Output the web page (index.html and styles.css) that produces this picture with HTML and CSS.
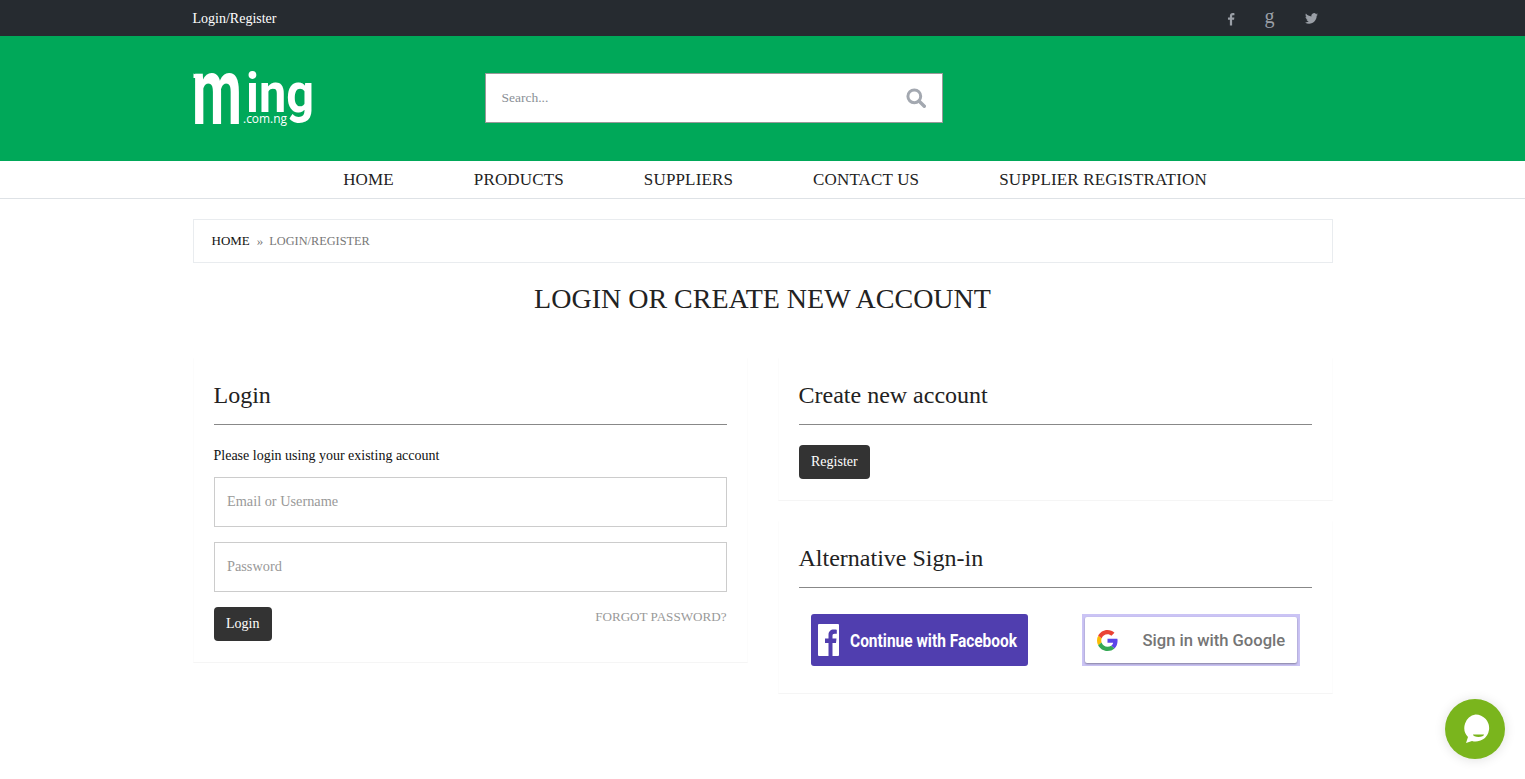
FILE: index.html
```
<!DOCTYPE html>
<html lang="en">
<head>
<meta charset="utf-8">
<title>Login or create new account</title>
<link rel="stylesheet" href="styles.css">
</head>
<body>
<div class="topbar">
  <div class="container topbar-row">
    <a class="top-link">Login/Register</a>
    <div class="socials">
      <svg class="soc soc-f" viewBox="0 0 10 16" width="8" height="14"><path d="M6.400 16V9h2.400l.4-2.800H6.400V4.500c0-.8.2-1.300 1.400-1.300h1.500V.7C9 .7 8.200.6 7.200.6 5 .6 3.600 1.900 3.600 4.200v2H1.200V9h2.400v7z" fill="#9a9fa6"/></svg>
      <span class="soc-g">g</span>
      <svg class="soc soc-t" viewBox="0 0 24 20" width="13" height="11"><path d="M24 2.400c-.9.400-1.800.7-2.800.8 1-.6 1.800-1.600 2.200-2.700-1 .6-2 1-3.100 1.200A4.900 4.900 0 0 0 11.900 6.200C7.800 6 4.200 4 1.700.9c-1.300 2.200-.7 5.100 1.500 6.600-.8 0-1.600-.2-2.200-.6 0 2.300 1.600 4.400 3.900 4.900-.7.200-1.500.2-2.200.1.600 2 2.400 3.400 4.600 3.400A9.900 9.900 0 0 1 0 17.300 14 14 0 0 0 7.500 19.500c9.100 0 14.300-7.700 14-14.600 1-.7 1.800-1.500 2.500-2.500z" fill="#9a9fa6"/></svg>
    </div>
  </div>
</div>

<header class="brand">
  <div class="container brand-row">
    <svg class="logo" viewBox="0 0 122 58" width="122" height="58" role="img" aria-label="ming.com.ng">
      <path d="M0.500 3.500l10 4.500H0.500z" fill="#fff"/>
      <text class="logo-m" x="-1" y="54" textLength="50" lengthAdjust="spacingAndGlyphs">m</text>
      <text class="logo-main" x="53" y="42" textLength="68" lengthAdjust="spacingAndGlyphs">ing</text>
      <text class="logo-sub" x="50" y="53" textLength="44" lengthAdjust="spacingAndGlyphs">.com.ng</text>
    </svg>
    <form class="search">
      <span class="search-text">Search...</span>
      <svg class="search-icon" viewBox="0 0 20 20" width="20" height="20"><circle cx="8.300" cy="8.300" r="6.400" fill="none" stroke="#a3a8b0" stroke-width="3"/><path d="M13 13l5.300 5.300" stroke="#a3a8b0" stroke-width="3.400" stroke-linecap="round"/></svg>
    </form>
  </div>
</header>

<nav class="mainnav">
  <a>HOME</a><a>PRODUCTS</a><a>SUPPLIERS</a><a>CONTACT US</a><a>SUPPLIER REGISTRATION</a>
</nav>

<main class="container">
  <div class="crumbs"><a class="crumb-home">HOME</a><span class="crumb-sep">»</span><span class="crumb-cur">LOGIN/REGISTER</span></div>
  <h1 class="page-title">LOGIN OR CREATE NEW ACCOUNT</h1>
  <div class="cols">
    <section class="panel">
      <h2 class="panel-title">Login</h2>
      <p class="panel-note">Please login using your existing account</p>
      <div class="field">Email or Username</div>
      <div class="field">Password</div>
      <div class="form-foot">
        <a class="btn">Login</a>
        <a class="forgot">FORGOT PASSWORD?</a>
      </div>
    </section>
    <div class="col-right">
      <section class="panel panel-reg">
        <h2 class="panel-title">Create new account</h2>
        <a class="btn">Register</a>
      </section>
      <section class="panel panel-alt">
        <h2 class="panel-title">Alternative Sign-in</h2>
        <div class="alt-row">
          <a class="fb-btn">
            <svg viewBox="0 0 21 32" width="21" height="32"><rect width="21" height="32" rx="1" fill="#fff"/><path d="M14.500 32V19h3.500l.5-4.500h-4v-2.600c0-1.300.4-2.100 2.200-2.100h2.100V5.800c-.4 0-1.700-.2-3.100-.2-3.100 0-5.200 1.900-5.200 5.300v3.600H7V19h3.500v13z" fill="#503eaf"/></svg>
            <span class="fb-text">Continue with Facebook</span>
          </a>
          <a class="g-wrap">
            <span class="g-btn">
              <svg viewBox="0 0 48 48" width="21" height="21"><path fill="#ea4335" d="M24 9.500c3.500 0 6.700 1.300 9.100 3.500l6.800-6.800C35.800 2.400 30.200 0 24 0 14.600 0 6.500 5.400 2.600 13.200l7.900 6.100C12.400 13.600 17.700 9.500 24 9.500z"/><path fill="#5b45e8" d="M47 24.500c0-1.600-.1-3.100-.4-4.500H24v9h12.900c-.6 3-2.200 5.500-4.700 7.200l7.700 6c4.500-4.200 7.100-10.300 7.100-17.700z"/><path fill="#fbbc05" d="M10.500 28.700c-.5-1.500-.8-3-.8-4.700s.3-3.200.8-4.700l-7.900-6.100C.9 16.500 0 20.100 0 24s.9 7.500 2.600 10.800z"/><path fill="#34a853" d="M24 48c6.500 0 11.900-2.100 15.900-5.800l-7.700-6c-2.200 1.500-4.900 2.300-8.200 2.300-6.300 0-11.600-4.200-13.500-9.900l-7.900 6.200C6.500 42.600 14.600 48 24 48z"/></svg>
              <span class="g-text">Sign in with Google</span>
            </span>
          </a>
        </div>
      </section>
    </div>
  </div>
</main>

<a class="chat" aria-label="Chat">
  <svg viewBox="0 0 30 30" width="30" height="30"><path d="M15.500 0.500a13.500 13.500 0 1 1-3.500 26.500L6 29l2-6A13.500 13.500 0 0 1 15.500 0.500z" fill="#fff"/><path d="M13 20.500h11a5.500 2.500 0 0 1-11 0z" fill="#7ab51d"/></svg>
</a>
</body>
</html>
```
FILE: styles.css
```
* { box-sizing: border-box; }
html, body { margin: 0; padding: 0; }
body { font-family: "Liberation Serif", serif; color: #212529; background: #fff; height: 779px; overflow: hidden; position: relative; }
.container { width: 1140px; margin: 0 auto; }

.topbar { background: #262b30; height: 36px; }
.topbar-row { display: flex; justify-content: space-between; align-items: center; height: 36px; padding-top: 1px; }
.top-link { color: #fff; font-size: 14px; }
.socials { display: flex; align-items: center; gap: 30px; padding-right: 15px; }
.soc { display: block; }
.soc-g { color: #9a9fa6; font-size: 20px; line-height: 14px; margin-top: -5px; }

.brand { background: #00a859; height: 125px; }
.brand-row { display: flex; align-items: flex-start; }
.logo { margin-top: 34px; display: block; flex: none; overflow: visible; }
.logo-m { font-family: "Roboto", sans-serif; font-weight: 700; font-size: 95px; fill: #fff; }
.logo-main { font-family: "Roboto", sans-serif; font-weight: 700; font-size: 56px; fill: #fff; }
.logo-sub { font-family: "Open Sans", sans-serif; font-size: 12px; fill: #fff; }
.search { margin-left: 170px; margin-top: 37px; width: 458px; height: 50px; background: #fff; border: 1px solid #999; display: flex; align-items: center; justify-content: space-between; padding: 0 16px; }
.search-text { color: #8a8f96; font-size: 13.500px; }
.search-icon { display: block; }

.mainnav { height: 38px; border-bottom: 1px solid #dee2e6; display: flex; justify-content: center; align-items: center; gap: 80px; padding: 1px 0 0 25px; }
.mainnav a { font-size: 17px; letter-spacing: .15px; color: #222; }

.crumbs { margin-top: 20px; height: 44px; border: 1px solid #e9ecef; display: flex; align-items: center; padding-left: 18px; font-size: 13px; }
.crumb-home { color: #111; }
.crumb-sep { color: #777; margin: 0 6px 0 7px; }
.crumb-cur { color: #777; font-size: 12.300px; }

.page-title { margin: 19px 0 0; font-weight: 400; font-size: 28px; line-height: 34px; text-align: center; color: #222; }

.cols { display: grid; grid-template-columns: 555px 555px; column-gap: 30px; margin-top: 42px; align-items: start; }
.panel { padding: 21px 20px 21px; border: 1px solid #fcfcfc; border-top-color: #fff; border-bottom-color: #f5f5f5; }
.panel-title { margin: 0 0 20px; padding-bottom: 14px; border-bottom: 1px solid #888; font-weight: 400; font-size: 24px; line-height: 30px; color: #222; }
.panel-note { margin: 0 0 11px; padding-top: 1px; font-size: 14px; line-height: 20px; color: #111; }
.field { height: 50px; border: 1px solid #ccc; margin-bottom: 15px; padding: 0 12.500px 2px; display: flex; align-items: center; font-size: 14.300px; color: #999; }
.form-foot { display: flex; justify-content: space-between; align-items: flex-start; }
.btn { display: inline-block; background: #333; color: #fff; font-size: 14px; height: 34px; line-height: 34px; padding: 0 12.500px; border-radius: 4px; }
.forgot { color: #999; font-size: 13.100px; line-height: 20px; }
.panel-alt { margin-top: 20px; padding-bottom: 27px; }
.panel-alt .panel-title { margin-bottom: 26px; }
.alt-row { display: flex; justify-content: space-between; padding: 0 12px; }
.fb-btn { width: 217px; height: 52px; background: #503eaf; border-radius: 3px; display: flex; align-items: center; gap: 11px; padding-left: 7px; overflow: hidden; }
.fb-btn svg { display: block; flex: none; }
.fb-text { font-family: "Roboto", sans-serif; font-weight: 700; font-size: 18px; color: #fff; display: inline-block; transform: scaleX(.86); transform-origin: left center; white-space: nowrap; }
.g-wrap { width: 218px; height: 52px; background: #cbc4f5; padding: 3px; display: block; }
.g-btn { display: flex; align-items: center; height: 46px; background: #fff; border-radius: 2px; box-shadow: 0 1px 2px rgba(0,0,0,.35); padding-left: 12px; }
.g-btn svg { display: block; flex: none; }
.g-text { font-family: "Roboto", sans-serif; font-weight: 500; font-size: 16.600px; color: #757575; margin-left: 25px; white-space: nowrap; }

.chat { position: absolute; left: 1445px; top: 699px; width: 60px; height: 60px; border-radius: 50%; background: #7ab51d; display: flex; align-items: center; justify-content: center; box-shadow: 0 1px 12px rgba(0,0,0,.12); }
.chat svg { display: block; }
```
